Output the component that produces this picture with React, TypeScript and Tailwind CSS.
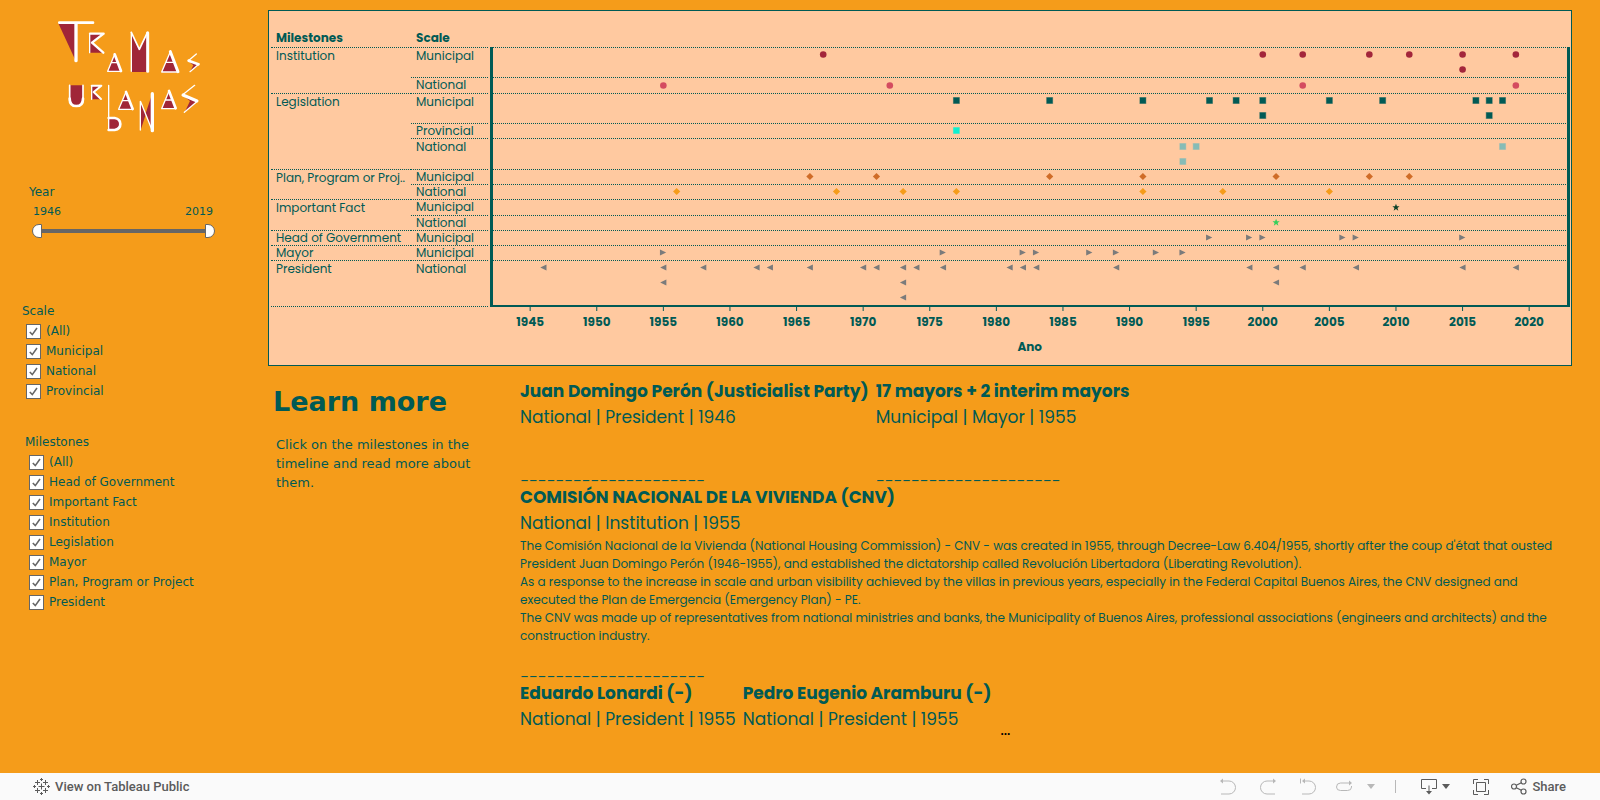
import React, { useState } from "react";

type Shape = "circle" | "square" | "diamond" | "star" | "right" | "left";

interface ScaleRow {
  scale: string;
  height: string;
  top: number;
  firstMark: number;
  shape: Shape;
  color: string;
  levels: number[][];
}

interface Milestone {
  name: string;
  rows: ScaleRow[];
}

const MILESTONES: Milestone[] = [
  {
    name: "Institution",
    rows: [
      { scale: "Municipal", height: "h-[30px]", top: 0, firstMark: 7, shape: "circle", color: "#a3263b", levels: [[1967, 2000, 2003, 2008, 2011, 2015, 2019], [2015]] },
      { scale: "National", height: "h-4", top: 30, firstMark: 38, shape: "circle", color: "#d44c60", levels: [[1955, 1972, 2003, 2019]] },
    ],
  },
  {
    name: "Legislation",
    rows: [
      { scale: "Municipal", height: "h-[30px]", top: 46, firstMark: 53, shape: "square", color: "#005a55", levels: [[1977, 1984, 1991, 1996, 1998, 2000, 2005, 2009, 2016, 2017, 2018], [2000, 2017]] },
      { scale: "Provincial", height: "h-[15px]", top: 76, firstMark: 83, shape: "square", color: "#0ff0d0", levels: [[1977]] },
      { scale: "National", height: "h-[31px]", top: 91, firstMark: 99, shape: "square", color: "#86bcb6", levels: [[1994, 1995, 2018], [1994]] },
    ],
  },
  {
    name: "Plan, Program or Proj..",
    rows: [
      { scale: "Municipal", height: "h-[15px]", top: 122, firstMark: 129, shape: "diamond", color: "#cf6c28", levels: [[1966, 1971, 1984, 1991, 2001, 2008, 2011]] },
      { scale: "National", height: "h-[15px]", top: 137, firstMark: 144, shape: "diamond", color: "#f59c1a", levels: [[1956, 1968, 1973, 1977, 1991, 1997, 2005]] },
    ],
  },
  {
    name: "Important Fact",
    rows: [
      { scale: "Municipal", height: "h-4", top: 152, firstMark: 160, shape: "star", color: "#0f4229", levels: [[2010]] },
      { scale: "National", height: "h-[15px]", top: 168, firstMark: 175, shape: "star", color: "#35cf5b", levels: [[2001]] },
    ],
  },
  {
    name: "Head of Government",
    rows: [{ scale: "Municipal", height: "h-[15px]", top: 183, firstMark: 190, shape: "right", color: "#7b7b7b", levels: [[1996, 1999, 2000, 2006, 2007, 2015]] }],
  },
  {
    name: "Mayor",
    rows: [{ scale: "Municipal", height: "h-[15px]", top: 198, firstMark: 205, shape: "right", color: "#7b7b7b", levels: [[1955, 1976, 1982, 1983, 1987, 1989, 1992, 1994]] }],
  },
  {
    name: "President",
    rows: [
      {
        scale: "National",
        height: "h-[46px]",
        top: 213,
        firstMark: 220,
        shape: "left",
        color: "#7b7b7b",
        levels: [
          [1946, 1955, 1958, 1962, 1963, 1966, 1970, 1971, 1973, 1974, 1976, 1981, 1982, 1983, 1989, 1999, 2001, 2003, 2007, 2015, 2019],
          [1955, 1973, 2001],
          [1973],
        ],
      },
    ],
  },
];

const TICKS = [1945, 1950, 1955, 1960, 1965, 1970, 1975, 1980, 1985, 1990, 1995, 2000, 2005, 2010, 2015, 2020];
const FIRST_YEAR = 1942.21;
const YEAR_SPAN = 80.63;
const toX = (year: number) => `${((year - FIRST_YEAR) / YEAR_SPAN) * 100}%`;

const POPPINS = "font-[Poppins,Inter,sans-serif]";

function Mark({ shape, color }: { shape: Shape; color: string }) {
  switch (shape) {
    case "circle":
      return <circle r="3.3" fill={color} />;
    case "square":
      return <rect x="-3" y="-3" width="6" height="6" fill={color} stroke={color} strokeOpacity="0.4" />;
    case "diamond":
      return <path d="M0-3.6 3.6 0 0 3.6-3.6 0Z" fill={color} />;
    case "star":
      return <path d="M0-3.8 1-1.2 3.6-1.2 1.5.5 2.300 3.200 0 1.600-2.300 3.200-1.500.5-3.600-1.200-1-1.200Z" fill={color} />;
    case "right":
      return <path d="M-3.4-3 2.8 0-3.4 3Z" fill={color} />;
    case "left":
      return <path d="M3-3-3.2 0 3 3Z" fill={color} />;
  }
}

function Logo() {
  return (
    <svg viewBox="0 0 690 450" className="h-[150px] w-[230px]" role="img" aria-label="Tramas Urbanas">
      <g fill="#a02638">
        <path d="M115 70h52v112Z" />
        <path d="M209 100h40l-33 28 32 30h-39Z" />
        <path d="M284 162l20 53h-41Z" />
        <path d="M334 96l24 52 24-50v118h-48Z" />
        <path d="M451 154l24 63h-50Z" />
        <path d="M530 162l-23 19 30 12-27 23 10-20-15-13Z" />
        <path d="M149 256h40v46q-4 15-20 15t-20-15Z" />
        <path d="M215 256h30l-24 20 24 22h-30Z" />
        <path d="M266 356h20q15 2 15 17t-15 17h-20Z" />
        <path d="M318 275l20 53h-42Z" />
        <path d="M361 304l16 36 20-60v112l-20-48-15 46Z" />
        <path d="M447 272l20 54h-42Z" />
        <path d="M524 256l-35 28 43 20-38 33 16-34-22-17Z" />
      </g>
      <g fill="none" stroke="#fff" strokeLinejoin="round" strokeLinecap="round">
        <path d="M118 68h101" strokeWidth="8" />
        <path d="M168 70v112" strokeWidth="10" />
        <path d="M209 101v57M215 257v41M266 256v134M334 97v117M361 304v86" strokeWidth="4" />
        <path d="M210 101h41l-35 27 34 30" strokeWidth="7" />
        <path d="M215 257h29l-23 19 22 21" strokeWidth="6" />
        <path d="M284 163l19 50M318 276l20 51M447 273l20 52" strokeWidth="8" />
        <path d="M284 163l-21 51h37M275 188h18M318 276l-22 52h39M309 302h18M447 273l-22 53h39M437 300h18" strokeWidth="4" />
        <path d="M334 97l24 51 24-50" strokeWidth="5" />
        <path d="M383 98v116" strokeWidth="9" />
        <path d="M451 155l23 60" strokeWidth="9" />
        <path d="M451 155l-26 61h46M439 187h23" strokeWidth="4" />
        <path d="M529 162l-24 20 5 2M537 192l-27 23" strokeWidth="4" />
        <path d="M506 182l29 11" strokeWidth="8" />
        <path d="M149 256v46M189 256v46" strokeWidth="5" />
        <path d="M149 296q0 22 20 22t20-22" strokeWidth="8" />
        <path d="M266 354h18q17 3 17 18t-17 18h-18" strokeWidth="8" />
        <path d="M362 305l34 85" strokeWidth="4" />
        <path d="M397 281v111" strokeWidth="10" />
        <path d="M524 256l-36 28M532 304l-39 33" strokeWidth="4" />
        <path d="M489 285l42 18" strokeWidth="9" />
      </g>
    </svg>
  );
}

const THUMB =
  "pointer-events-none absolute inset-0 h-[14px] w-full appearance-none bg-transparent [&::-webkit-slider-thumb]:pointer-events-auto [&::-webkit-slider-thumb]:h-[14px] [&::-webkit-slider-thumb]:w-[10px] [&::-webkit-slider-thumb]:appearance-none [&::-webkit-slider-thumb]:border [&::-webkit-slider-thumb]:border-solid [&::-webkit-slider-thumb]:border-[#666] [&::-webkit-slider-thumb]:bg-white";

function YearFilter() {
  const [from, setFrom] = useState(1946);
  const [to, setTo] = useState(2019);
  return (
    <section className="mt-[33px] pr-[53px] pl-[29px]">
      <h2 className="text-xs leading-[18px]">Year</h2>
      <div className="mt-[2px] flex justify-between pl-1 text-[11px] leading-[18px]">
        <label htmlFor="year-from">{from}</label>
        <label htmlFor="year-to" className="pr-[2px]">{to}</label>
      </div>
      <div className="relative mt-[3px] ml-[3px] flex h-[14px] items-center">
        <div className="mx-[9px] h-1 flex-1 bg-[#666]" />
        <input id="year-from" type="range" min={1946} max={2019} value={from} onChange={(e) => setFrom(Math.min(Number(e.target.value), to))} className={`${THUMB} [&::-webkit-slider-thumb]:rounded-l-full`} />
        <input id="year-to" type="range" min={1946} max={2019} value={to} onChange={(e) => setTo(Math.max(Number(e.target.value), from))} className={`${THUMB} [&::-webkit-slider-thumb]:rounded-r-full`} />
      </div>
    </section>
  );
}

function CheckList({ title, options, className }: { title: string; options: string[]; className: string }) {
  return (
    <fieldset className={`text-xs ${className}`}>
      <legend className="leading-[19px]">{title}</legend>
      {options.map((option) => (
        <label key={option} className="flex h-5 items-center gap-[5px] pl-1">
          <span className="grid size-[15px]">
            <input type="checkbox" defaultChecked className="peer col-start-1 row-start-1 size-[15px] appearance-none border border-[#666] bg-white" />
            <svg viewBox="0 0 15 15" className="pointer-events-none col-start-1 row-start-1 hidden size-[15px] peer-checked:block" fill="none" stroke="#666" strokeWidth="1.6">
              <path d="M3.8 8 6.3 10.6 11 4" />
            </svg>
          </span>
          {option}
        </label>
      ))}
    </fieldset>
  );
}

function Timeline() {
  const rows = MILESTONES.flatMap((m) => m.rows);
  return (
    <section className={`flex h-[356px] border border-[#005a55] bg-[#ffc9a0] pr-px pl-[2px] ${POPPINS}`}>
      <table className="mt-[18px] w-[217px] table-fixed border-separate border-spacing-0 self-start text-xs leading-[14px]">
        <thead>
          <tr className="h-[18px] text-left align-top">
            <th className="w-[140px] p-0 pt-[2px] pl-[5px] font-bold">Milestones</th>
            <th className="p-0 pt-[2px] pl-[5px] font-bold">Scale</th>
          </tr>
        </thead>
        <tbody className="align-top">
          {MILESTONES.map((m) =>
            m.rows.map((row, i) => (
              <tr key={`${m.name}-${row.scale}`} className={row.height}>
                {i === 0 && (
                  <th
                    rowSpan={m.rows.length}
                    scope="rowgroup"
                    className={`overflow-hidden border-t border-dotted border-[#005a55] pl-[5px] text-left font-normal whitespace-nowrap ${m.rows.length > 1 || row.levels.length > 1 ? "pt-px" : ""}`}
                  >
                    {m.name}
                  </th>
                )}
                <td className={`border-t border-dotted border-[#005a55] pl-[5px] ${row.levels.length > 1 ? "pt-px" : ""}`}>{row.scale}</td>
              </tr>
            )),
          )}
          <tr>
            <td colSpan={2} className="h-px border-t border-dotted border-[#005a55] p-0" />
          </tr>
        </tbody>
      </table>
      <div className="mt-9 ml-[2px] min-w-0 flex-1">
        <svg className="block h-[260px] w-full overflow-visible border-x-[3px] border-b-2 border-[#005a55]" role="img" aria-label="Milestones by year">
          {rows.map((row) => (
            <line key={row.top} x1="0" x2="100%" y1={row.top + 0.5} y2={row.top + 0.5} stroke="#005a55" strokeDasharray="1 1" />
          ))}
          {rows.map((row) =>
            row.levels.map((years, level) =>
              years.map((year) => (
                <svg key={`${row.top}-${level}-${year}`} x={toX(year)} y={row.firstMark + level * 15 + 0.5} className="overflow-visible">
                  <Mark shape={row.shape} color={row.color} />
                </svg>
              )),
            ),
          )}
        </svg>
        <svg className="mx-[3px] block h-[50px] w-[calc(100%-6px)] overflow-visible" fill="#005a55" fontSize="12" fontWeight="700" textAnchor="middle">
          {TICKS.map((tick) => (
            <React.Fragment key={tick}>
              <line x1={toX(tick)} x2={toX(tick)} y1="0" y2="4" stroke="#005a55" />
              <text x={toX(tick)} y="19">{tick}</text>
            </React.Fragment>
          ))}
          <text x={toX(1982.5)} y="44">Ano</text>
        </svg>
      </div>
    </section>
  );
}

function Entry({ title, meta }: { title: string; meta: string }) {
  return (
    <div className="text-[17px] leading-[26px] whitespace-nowrap">
      <h3 className="font-bold">{title}</h3>
      <p>{meta}</p>
    </div>
  );
}

function Rule() {
  return <p className="text-xs leading-4">_____________________</p>;
}

function Details() {
  return (
    <article className={`min-w-0 flex-1 pt-3 ${POPPINS}`}>
      <div className="flex gap-[7px]">
        <div>
          <Entry title="Juan Domingo Perón (Justicialist Party)" meta="National | President | 1946" />
          <div className="mt-[38px]"><Rule /></div>
        </div>
        <div>
          <Entry title="17 mayors + 2 interim mayors" meta="Municipal | Mayor | 1955" />
          <div className="mt-[38px]"><Rule /></div>
        </div>
      </div>
      <Entry title="COMISIÓN NACIONAL DE LA VIVIENDA (CNV)" meta="National | Institution | 1955" />
      <div className="mt-px text-xs leading-[18px] whitespace-nowrap">
        <p>
          The Comisión Nacional de la Vivienda (National Housing Commission) - CNV - was created in 1955, through Decree-Law 6.404/1955, shortly after the coup d'état that ousted
          <br />
          President Juan Domingo Perón (1946-1955), and established the dictatorship called Revolución Libertadora (Liberating Revolution).
        </p>
        <p>
          As a response to the increase in scale and urban visibility achieved by the villas in previous years, especially in the Federal Capital Buenos Aires, the CNV designed and
          <br />
          executed the Plan de Emergencia (Emergency Plan) - PE.
        </p>
        <p>
          The CNV was made up of representatives from national ministries and banks, the Municipality of Buenos Aires, professional associations (engineers and architects) and the
          <br />
          construction industry.
        </p>
      </div>
      <div className="mt-[19px]"><Rule /></div>
      <div className="flex gap-[7px]">
        <Entry title="Eduardo Lonardi (-)" meta="National | President | 1955" />
        <Entry title="Pedro Eugenio Aramburu (-)" meta="National | President | 1955" />
        <span className="pt-11 pl-[2px] font-['Liberation_Sans',sans-serif] text-xs leading-[14px] font-bold text-black">...</span>
      </div>
    </article>
  );
}

function TableauMark() {
  return (
    <svg viewBox="0 0 17 17" className="size-[17px]" stroke="#5b5b5b" strokeWidth="1" fill="none" aria-hidden="true">
      <path d="M8.5 5.5v6M5.5 8.5h6M8.5 0v3M7 1.5h3M8.5 14v3M7 15.5h3M1.5 7v3M0 8.5h3M15.5 7v3M14 8.5h3M4.5 2v5M2 4.5h5M12.5 2v5M10 4.5h5M4.5 10v5M2 12.5h5M12.5 10v5M10 12.5h5" />
    </svg>
  );
}

function Toolbar() {
  return (
    <footer className="flex h-[27px] items-center justify-between bg-[#fafafa] pr-[33px] pl-[33px] font-[Roboto,sans-serif] text-[13px] font-medium text-[#5b5b5b]">
      <a href="#tableau" className="flex items-center gap-[5px]">
        <TableauMark />
        View on Tableau Public
      </a>
      <div className="flex items-center">
        <button type="button" aria-label="Undo" className="mr-6 text-[#b8b8b8]">
          <svg viewBox="0 0 16 17" className="block h-[17px] w-4" fill="none" stroke="currentColor">
            <path d="M1 3h8a6.5 6.5 0 0 1 0 13H1" />
            <path d="M0 3 3 .5v5Z" fill="currentColor" stroke="none" />
          </svg>
        </button>
        <button type="button" aria-label="Redo" className="mr-6 text-[#b8b8b8]">
          <svg viewBox="0 0 16 17" className="block h-[17px] w-4" fill="none" stroke="currentColor">
            <path d="M15 3H7a6.5 6.5 0 0 0 0 13h8" />
            <path d="M16 3 13 .5v5Z" fill="currentColor" stroke="none" />
          </svg>
        </button>
        <button type="button" aria-label="Reset" className="mr-5 text-[#b8b8b8]">
          <svg viewBox="0 0 16 17" className="block h-[17px] w-4" fill="none" stroke="currentColor">
            <path d="M.5.5v5M3 3h6a6.5 6.5 0 0 1 0 13H2" />
            <path d="M2 3 5 .5v5Z" fill="currentColor" stroke="none" />
          </svg>
        </button>
        <button type="button" aria-label="Refresh" className="mr-[15px] text-[#b8b8b8]">
          <svg viewBox="0 0 16 17" className="block h-[17px] w-4" fill="none" stroke="currentColor">
            <path d="M14 5H4.5a4 4 0 0 0-4 4q0 3.500 4 3.500h7q4 0 4-3.500V8" />
            <path d="M16 5 13 2.500v5Z" fill="currentColor" stroke="none" />
          </svg>
        </button>
        <button type="button" aria-label="Refresh options" className="mr-5 text-[#b8b8b8]">
          <svg viewBox="0 0 8 5" className="block h-[5px] w-2" fill="currentColor"><path d="M0 0h8L4 5Z" /></svg>
        </button>
        <span className="mr-[25px] h-[13px] w-px bg-[#b8b8b8]" />
        <button type="button" aria-label="Download" className="mr-[23px] flex items-center gap-[5px]">
          <svg viewBox="0 0 16 17" className="block h-[17px] w-4" fill="none" stroke="currentColor">
            <path d="M5 10.500H.5V1.500h15v9H11M8 7.500V14" />
            <path d="M5 13h6L8 16.500Z" fill="currentColor" stroke="none" />
          </svg>
          <svg viewBox="0 0 8 5" className="block h-[5px] w-2" fill="currentColor"><path d="M0 0h8L4 5Z" /></svg>
        </button>
        <button type="button" aria-label="Full screen" className="mr-[22px]">
          <svg viewBox="0 0 16 16" className="block size-4" fill="none" stroke="currentColor">
            <path d="M.5 5V.5H5M11 .5h4.500V5M15.500 11v4.500H11M5 15.500H.5V11M3.500 3.500h9v9h-9Z" />
          </svg>
        </button>
        <button type="button" className="flex items-center gap-[5px]">
          <svg viewBox="0 0 16 17" className="block h-[17px] w-4" fill="none" stroke="currentColor" strokeWidth="1.200" aria-hidden="true">
            <circle cx="3" cy="8.500" r="2.500" />
            <circle cx="12.500" cy="3.500" r="2.500" />
            <circle cx="12.500" cy="13.500" r="2.500" />
            <path d="M5.300 7.300 10.300 4.700M5.300 9.700 10.300 12.300" />
          </svg>
          <span className="pr-px">Share</span>
        </button>
      </div>
    </footer>
  );
}

export default function App() {
  return (
    <div className="flex min-h-screen flex-col bg-[#f59c1a] font-['DejaVu_Sans',sans-serif] text-[#005a55]">
      <main className="flex flex-1">
        <aside className="w-[268px] shrink-0">
          <div className="pl-5"><Logo /></div>
          <YearFilter />
          <CheckList title="Scale" className="mt-[64px] ml-[22px]" options={["(All)", "Municipal", "National", "Provincial"]} />
          <CheckList title="Milestones" className="mt-8 ml-[25px]" options={["(All)", "Head of Government", "Important Fact", "Institution", "Legislation", "Mayor", "Plan, Program or Project", "President"]} />
        </aside>
        <div className="min-w-0 flex-1 pt-[10px] pr-7">
          <Timeline />
          <div className="flex">
            <section className="w-[252px] shrink-0 pt-5 pl-[5px]">
              <h1 className="text-[27px] leading-8 font-bold">Learn more</h1>
              <p className="mt-[17px] w-[205px] pl-[3px] text-[13px] leading-[19px]">Click on the milestones in the timeline and read more about them.</p>
            </section>
            <Details />
          </div>
        </div>
      </main>
      <Toolbar />
    </div>
  );
}
